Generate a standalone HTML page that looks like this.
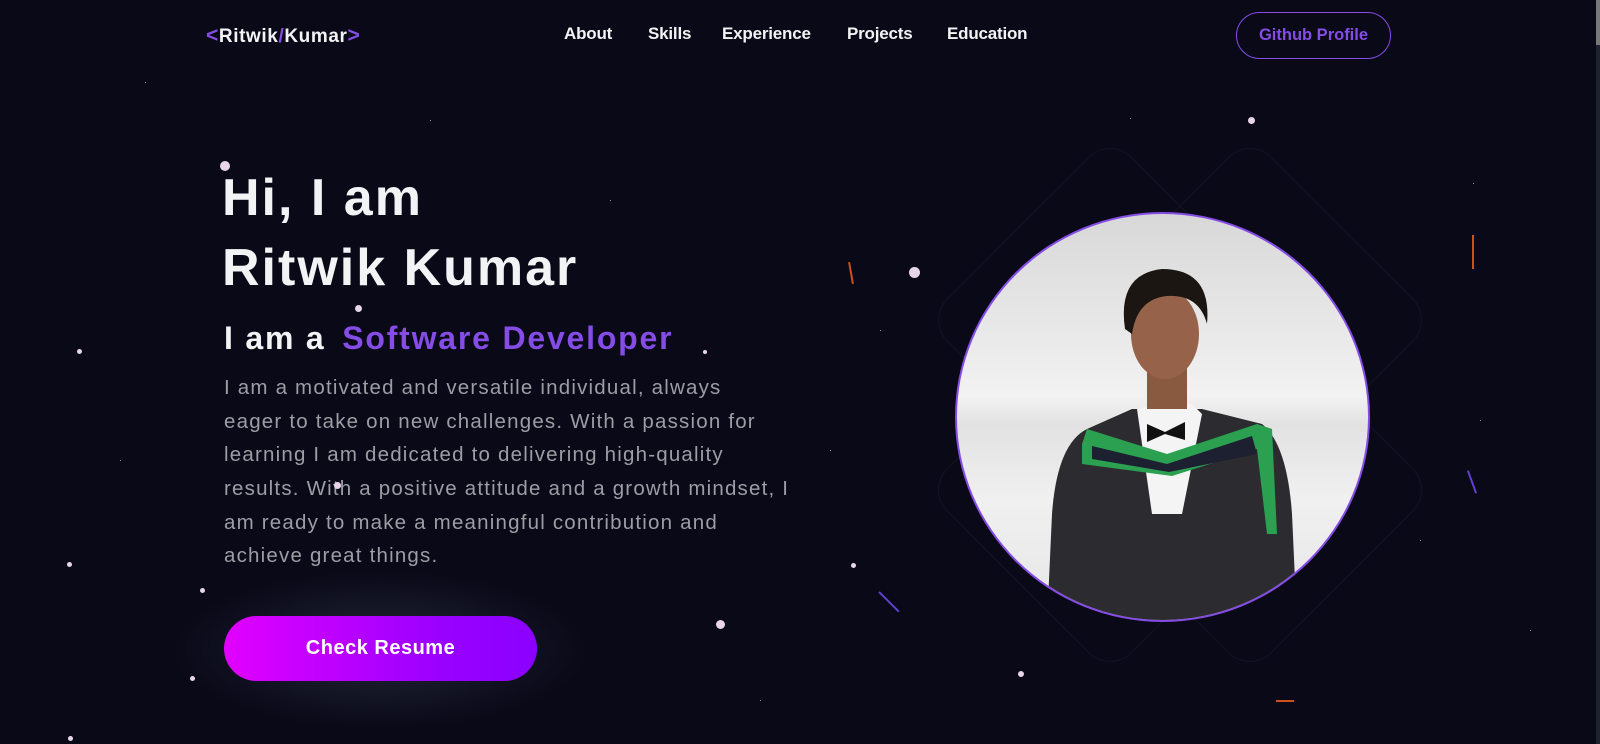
<!DOCTYPE html>
<html><head><meta charset="utf-8"><style>
*{margin:0;padding:0;box-sizing:border-box}
html,body{width:1600px;height:744px;overflow:hidden;background:#090917;font-family:"Liberation Sans",sans-serif;color:#f2f3f4}
.abs{position:absolute;white-space:nowrap}
.nav a{position:absolute;top:24px;font-size:17px;font-weight:700;color:#f2f3f4;letter-spacing:-0.2px}
.dot{position:absolute;border-radius:50%;background:#e8d6e8}
.s{position:absolute;width:1px;height:1px;background:#8a8aa0}
p.l{position:absolute;left:224px;font-size:20.5px;color:#9d9da6;white-space:nowrap;letter-spacing:1.2px}
</style></head><body>
<svg class="abs" style="left:900px;top:90px" width="560" height="600">
<g fill="none" stroke="#121226" stroke-width="1.2">
<rect x="80" y="100" width="260" height="260" rx="30" transform="rotate(45 210 230)"/>
<rect x="220" y="100" width="260" height="260" rx="30" transform="rotate(45 350 230)"/>
<rect x="80" y="270" width="260" height="260" rx="30" transform="rotate(45 210 400)"/>
<rect x="220" y="270" width="260" height="260" rx="30" transform="rotate(45 350 400)"/>
</g></svg>
<div class="abs" style="left:170px;top:570px;width:420px;height:160px;border-radius:50%;background:radial-gradient(ellipse,rgba(40,44,64,0.8),rgba(9,9,23,0) 70%)"></div>

<div class="abs" style="left:206px;top:24px;font-size:19px;font-weight:700;letter-spacing:0.6px">
<span style="color:#854ce6;font-size:21px">&lt;</span>Ritwik<span style="color:#854ce6">/</span>Kumar<span style="color:#854ce6;font-size:21px">&gt;</span></div>
<div class="nav">
<a style="left:564px">About</a><a style="left:648px">Skills</a><a style="left:722px">Experience</a><a style="left:847px">Projects</a><a style="left:947px">Education</a>
</div>
<div class="abs" style="left:1236px;top:12px;width:155px;height:47px;border:1.5px solid #854ce6;border-radius:24px;color:#854ce6;font-size:16.5px;font-weight:700;text-align:center;line-height:44px">Github Profile</div>

<div class="abs" style="left:222px;top:168px;font-size:52px;font-weight:700;line-height:60px;letter-spacing:2px">Hi, I am</div>
<div class="abs" style="left:222px;top:238px;font-size:52px;font-weight:700;line-height:60px;letter-spacing:2px">Ritwik Kumar</div>
<div class="abs" style="left:224px;top:318px;font-size:32px;font-weight:700;line-height:40px;letter-spacing:1.8px">I am a <span style="color:#854ce6;margin-left:6px">Software Developer</span></div>
<p class="l" style="top:376px">I am a motivated and versatile individual, always</p>
<p class="l" style="top:410px">eager to take on new challenges. With a passion for</p>
<p class="l" style="top:443px">learning I am dedicated to delivering high-quality</p>
<p class="l" style="top:477px">results. With a positive attitude and a growth mindset, I</p>
<p class="l" style="top:511px">am ready to make a meaningful contribution and</p>
<p class="l" style="top:544px">achieve great things.</p>

<div class="abs" style="left:224px;top:616px;width:313px;height:65px;border-radius:33px;background:linear-gradient(90deg,#e100ff,#9900ff 70%,#8a00ff);font-size:20px;font-weight:700;text-align:center;line-height:65px;color:#fff;letter-spacing:0.5px">Check Resume</div>

<div class="abs" style="left:955px;top:212px;width:415px;height:410px;border-radius:50%;border:2px solid #854ce6;overflow:hidden;background:linear-gradient(180deg,#d8d8d8 0%,#f2f2f2 45%,#e2e2e2 52%,#f0f0f0 70%,#e6e6e6 100%)">
<svg width="415" height="410" viewBox="0 0 415 410">
<path d="M90 410 L95 300 Q100 230 130 215 L175 195 L245 195 L305 210 Q330 230 335 300 L340 410 Z" fill="#2c2c30"/>
<path d="M180 195 L200 190 L235 190 L245 200 L225 300 L195 300 Z" fill="#f4f4f4"/>
<path d="M190 210 L208 218 L228 208 L228 226 L208 220 L190 228 Z" fill="#111"/>
<path d="M125 230 L130 215 L210 240 L300 210 L315 215 L320 320 L310 320 L300 235 L215 262 L125 250 Z" fill="#2aa050"/>
<path d="M135 232 L210 250 L295 222 L300 240 L212 258 L135 245 Z" fill="#1c2030"/>
<rect x="190" y="150" width="40" height="45" fill="#8a5a40"/>
<ellipse cx="208" cy="120" rx="34" ry="45" fill="#96634a"/>
<path d="M168 115 Q160 60 205 55 Q255 55 250 110 Q242 80 210 82 Q180 85 175 120 Z" fill="#1c1612"/>
</svg></div>

<div class="dot" style="left:220px;top:161px;width:10px;height:10px"></div>
<div class="dot" style="left:355px;top:305px;width:7px;height:7px"></div>
<div class="dot" style="left:909px;top:267px;width:11px;height:11px"></div>
<div class="dot" style="left:1248px;top:117px;width:7px;height:7px"></div>
<div class="dot" style="left:716px;top:620px;width:9px;height:9px"></div>
<div class="dot" style="left:77px;top:349px;width:5px;height:5px"></div>
<div class="dot" style="left:67px;top:562px;width:5px;height:5px"></div>
<div class="dot" style="left:200px;top:588px;width:5px;height:5px"></div>
<div class="dot" style="left:190px;top:676px;width:5px;height:5px"></div>
<div class="dot" style="left:68px;top:736px;width:5px;height:5px"></div>
<div class="dot" style="left:851px;top:563px;width:5px;height:5px"></div>
<div class="dot" style="left:1018px;top:671px;width:6px;height:6px"></div>
<div class="dot" style="left:334px;top:482px;width:7px;height:7px"></div>
<div class="dot" style="left:703px;top:350px;width:4px;height:4px"></div>
<div class="s" style="left:145px;top:82px"></div><div class="s" style="left:430px;top:120px"></div><div class="s" style="left:610px;top:200px"></div>
<div class="s" style="left:1473px;top:183px"></div><div class="s" style="left:1130px;top:118px"></div><div class="s" style="left:1530px;top:630px"></div>
<div class="s" style="left:880px;top:330px"></div><div class="s" style="left:120px;top:460px"></div><div class="s" style="left:760px;top:700px"></div>
<div class="s" style="left:1420px;top:540px"></div><div class="s" style="left:830px;top:450px"></div><div class="s" style="left:1480px;top:420px"></div>
<div class="abs" style="left:850px;top:262px;width:1.5px;height:22px;background:#d0501c;transform:rotate(-10deg)"></div>
<div class="abs" style="left:1472px;top:235px;width:1.5px;height:34px;background:#d0501c"></div>
<div class="abs" style="left:1276px;top:700px;width:18px;height:1.5px;background:#d0501c"></div>
<div class="abs" style="left:888px;top:588px;width:1.5px;height:28px;background:#6040d0;transform:rotate(-45deg)"></div>
<div class="abs" style="left:1471px;top:470px;width:1.5px;height:24px;background:#6040d0;transform:rotate(-20deg)"></div>
<div class="abs" style="left:1596px;top:0;width:4px;height:744px;background:#1e2130"></div>
<div class="abs" style="left:1596px;top:0;width:4px;height:45px;background:#777"></div>
</body></html>
